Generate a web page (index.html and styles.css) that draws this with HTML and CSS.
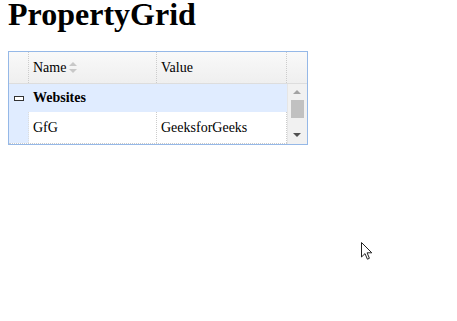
FILE: index.html
```html
<!DOCTYPE html>
<html lang="en">

<head>
    <meta charset="utf-8">
    <title>PropertyGrid</title>
    <link rel="stylesheet" href="styles.css">
</head>

<body>
    <h1>PropertyGrid</h1>

    <!--property grid-->
    <div class="pg">
        <div class="pg-head">
            <div class="cell c-exp"></div>
            <div class="cell c-name">Name <span class="sort"></span></div>
            <div class="cell c-val">Value</div>
            <div class="c-sb"></div>
        </div>
        <div class="pg-body">
            <div class="rows">
                <!--gruppe-->
                <div class="group">
                    <div class="g-exp"><span class="collapse"></span></div>
                    <div class="g-title">Websites</div>
                </div>
                <div class="row">
                    <div class="cell c-exp"></div>
                    <div class="cell c-name">GfG</div>
                    <div class="cell c-val">GeeksforGeeks</div>
                </div>
            </div>
            <!--scrollbar-->
            <div class="sb">
                <span class="sb-up"></span>
                <span class="sb-thumb"></span>
                <span class="sb-down"></span>
            </div>
        </div>
    </div>

    <!--musemarkør-->
    <svg class="cursor" width="12" height="19" viewBox="0 0 12 19">
        <path d="M0.5 0.5 L0.5 15 L4 11.6 L6.4 17.2 L8.4 16.3 L6.1 10.8 L10.8 10.8 Z" fill="#fff" stroke="#222" stroke-width="1"/>
    </svg>
</body>

</html>
```

FILE: styles.css
```css
body {
    margin: 0 8px;
    font-family: "Liberation Serif", serif;
    background: #fff;
}

h1 {
    margin: 0 0 23px;
    font-size: 32px;
    line-height: 28px;
    font-weight: bold;
}

/*selve griddet*/

.pg {
    width: 298px;
    border: 1px solid #95b8e7;
    font-family: "Liberation Serif", serif;
    font-size: 14px;
}

.pg-head {
    display: flex;
    height: 31px;
    background: linear-gradient(to bottom, #f9f9f9 0, #efefef 100%);
    border-bottom: 1px solid #dddddd;
}

.cell {
    display: flex;
    align-items: center;
    padding-left: 4px;
    border-right: 1px dotted #cccccc;
    box-sizing: border-box;
}

.c-exp {
    width: 20px;
    padding: 0;
}

.c-name {
    width: 128px;
}

.c-val {
    width: 130px;
}

.c-sb {
    flex: 1;
}

/*sorterings pile*/

.sort {
    position: relative;
    display: inline-block;
    width: 8px;
    height: 11px;
    margin-left: 3px;
}

.sort::before,
.sort::after {
    content: "";
    position: absolute;
    left: 0;
    border-left: 4px solid transparent;
    border-right: 4px solid transparent;
}

.sort::before {
    top: 0;
    border-bottom: 4px solid #c8c8c8;
}

.sort::after {
    bottom: 0;
    border-top: 4px solid #c8c8c8;
}

.pg-body {
    display: flex;
}

.rows {
    width: 278px;
}

.group {
    display: flex;
    align-items: center;
    height: 28px;
    background: #e0ecff;
    font-weight: bold;
}

.g-exp {
    width: 20px;
    display: flex;
    justify-content: center;
}

.collapse {
    width: 8px;
    height: 3px;
    border: 1px solid #333;
    background: #fff;
}

.g-title {
    padding-left: 4px;
}

.row {
    display: flex;
    height: 32px;
    border-bottom: 1px dotted #cccccc;
    box-sizing: border-box;
}

.row .c-exp {
    background: #e0ecff;
    border-right: 1px dotted #dddddd;
}

.row .cell {
    padding-top: 1px;
}

/*scrollbar*/

.sb {
    position: relative;
    flex: 1;
    background: #f1f1f1;
    border-left: 1px solid #e6e6e6;
}

.sb-up,
.sb-down {
    position: absolute;
    left: 5px;
    border-left: 4px solid transparent;
    border-right: 4px solid transparent;
}

.sb-up {
    top: 6px;
    border-bottom: 4px solid #a3a3a3;
}

.sb-down {
    bottom: 7px;
    border-top: 4px solid #505050;
}

.sb-thumb {
    position: absolute;
    top: 16px;
    left: 3px;
    width: 13px;
    height: 18px;
    background: #c1c1c1;
}

.cursor {
    position: absolute;
    left: 361px;
    top: 242px;
}
```
